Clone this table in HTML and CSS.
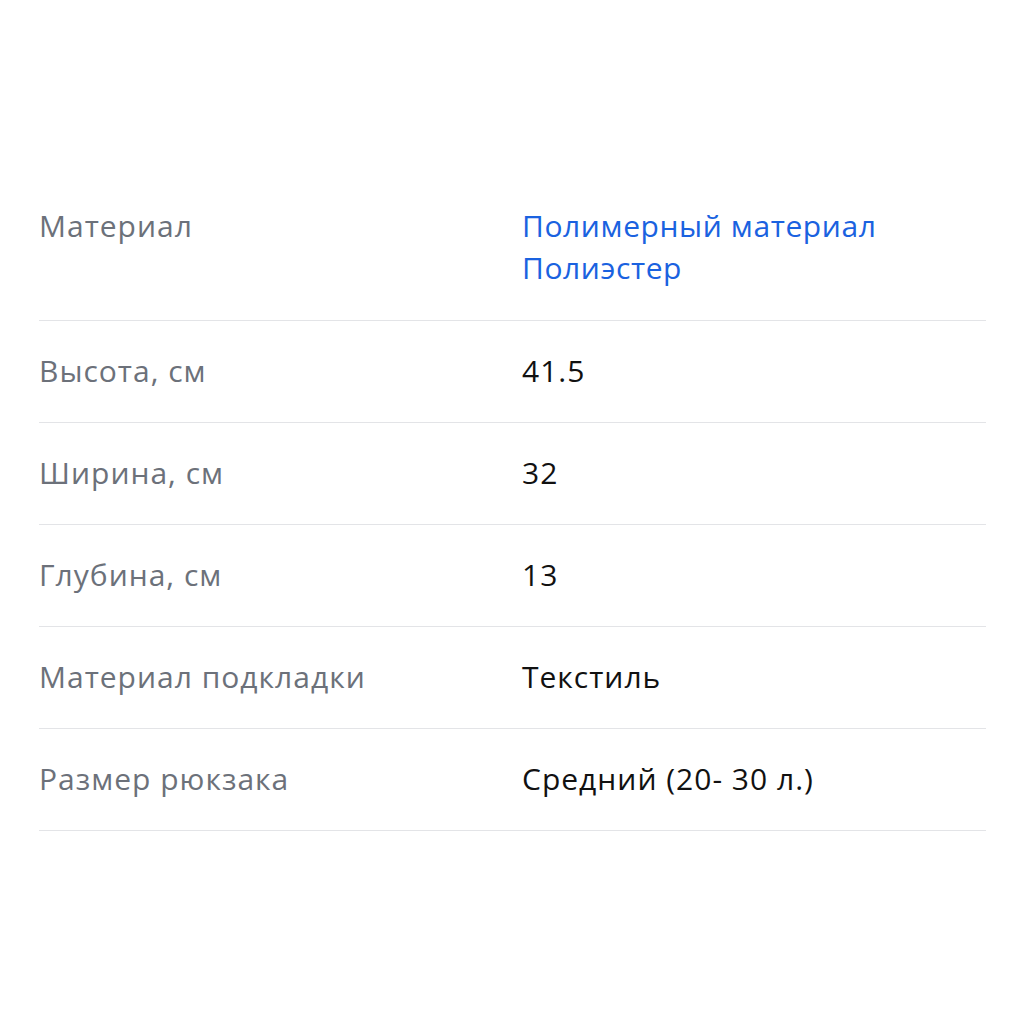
FILE: index.html
```html
<!DOCTYPE html>
<html lang="ru">
<head>
<meta charset="utf-8">
<link rel="stylesheet" href="styles.css">
</head>
<body>
<div class="specs">
  <div class="row">
    <div class="label">Материал</div>
    <div class="value link">Полимерный материал<br>Полиэстер</div>
  </div>
  <div class="row">
    <div class="label">Высота, см</div>
    <div class="value">41.5</div>
  </div>
  <div class="row">
    <div class="label">Ширина, см</div>
    <div class="value">32</div>
  </div>
  <div class="row">
    <div class="label">Глубина, см</div>
    <div class="value">13</div>
  </div>
  <div class="row">
    <div class="label">Материал подкладки</div>
    <div class="value">Текстиль</div>
  </div>
  <div class="row">
    <div class="label">Размер рюкзака</div>
    <div class="value">Средний (20- 30 л.)</div>
  </div>
</div>
</body>
</html>
```
FILE: styles.css
```css
html, body {
  margin: 0;
  padding: 0;
  background: #ffffff;
}
body {
  font-family: "Open Sans", "Noto Sans", sans-serif;
  font-size: 30px;
  letter-spacing: 1px;
}
.specs {
  width: 947px;
  margin-left: 39px;
  padding-top: 178px;
}
.row {
  display: grid;
  grid-template-columns: 483px 1fr;
  padding: 29px 0 31px;
  line-height: 41px;
  border-bottom: 1px solid #e3e4e7;
}
.row:first-child {
  line-height: 42px;
  padding: 27px 0 31px;
}
.label {
  color: #6c717a;
}
.value {
  color: #111111;
}
.value.link {
  color: #1a62e0;
  font-weight: 500;
  letter-spacing: 0.6px;
}
```
